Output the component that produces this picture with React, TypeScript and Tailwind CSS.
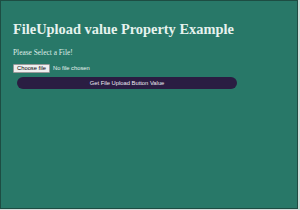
export default function App() {
  return (
    <div className="w-[300px] h-[210px] bg-[#d8dedc] overflow-hidden">
      <div className="w-[298px] h-[209px] bg-[#287868] border-t border-l border-r border-b border-[#1d4d43] px-[12px] pt-[20px]" style={{ fontFamily: '"Liberation Serif", serif' }}>
        <h1 className="text-[14.4px] leading-[16px] font-bold text-[#e6f2ee]">FileUpload value Property Example</h1>
        <p className="mt-[11px] text-[7.4px] leading-[9px] text-[#dcece6]">Please Select a File!</p>
        <div className="mt-[7px] flex items-center gap-[3px]" style={{ fontFamily: '"Liberation Sans", Arial, sans-serif' }}>
          <span className="h-[9px] px-[3px] flex items-center bg-[#efefef] border border-[#9a9a9a] rounded-[1px] text-[5.8px] text-black">Choose file</span>
          <span className="text-[5.8px] text-[#e8f2ef]">No file chosen</span>
        </div>
        <button className="mt-[4px] ml-[4px] w-[220px] h-[12px] rounded-full bg-[#2a1d42] text-[5.8px] text-[#eeeaf4] flex items-center justify-center" style={{ fontFamily: '"Liberation Sans", Arial, sans-serif' }}>Get File Upload Button Value</button>
      </div>
    </div>
  );
}
